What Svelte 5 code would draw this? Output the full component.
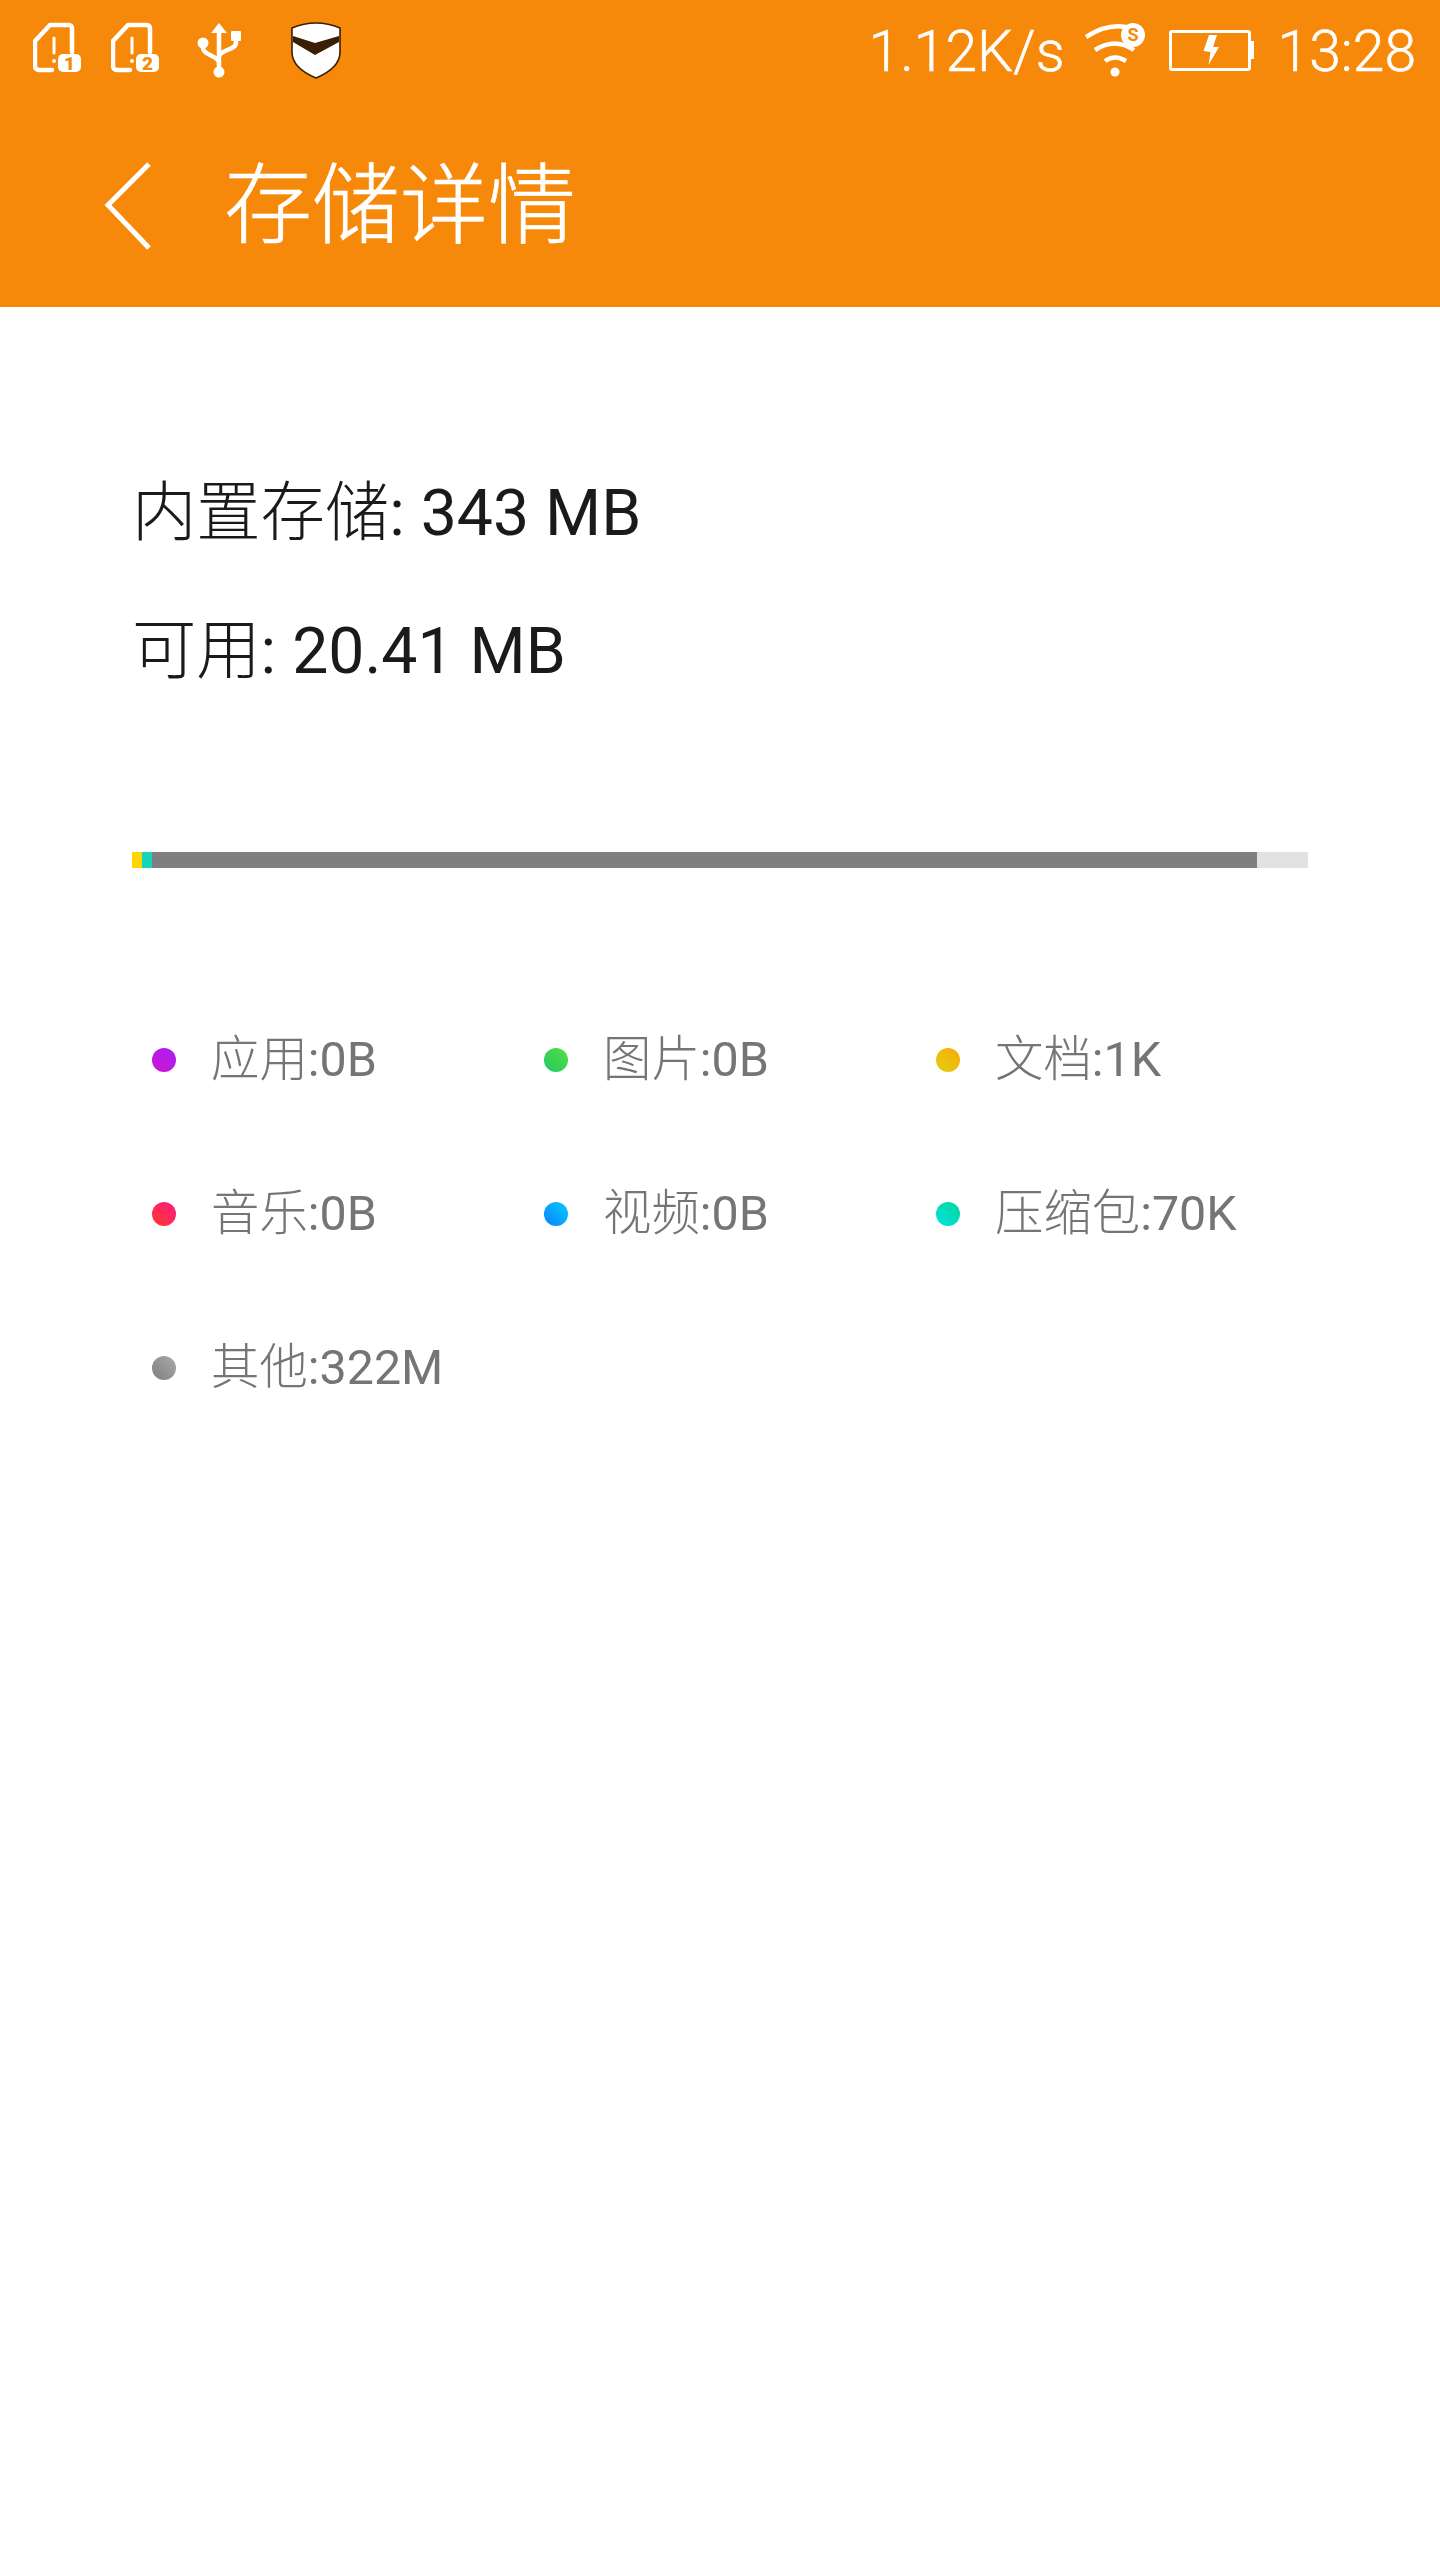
<script lang="ts">
	// 各カテゴリの凡例データ
	const legend = [
		{ name: '应用', size: ':0B', from: '#d014d0', to: '#a81ff5' },
		{ name: '图片', size: ':0B', from: '#1fc86a', to: '#5ade3c' },
		{ name: '文档', size: ':1K', from: '#e0d010', to: '#fba808' },
		{ name: '音乐', size: ':0B', from: '#ff3a2c', to: '#ff1a80' },
		{ name: '视频', size: ':0B', from: '#0a80ff', to: '#06ccff' },
		{ name: '压缩包', size: ':70K', from: '#00e2e0', to: '#05d69a' },
		{ name: '其他', size: ':322M', from: '#7e7e7e', to: '#ababab' }
	];
</script>

<div class="page">
	<header class="top">
		<div class="status">
			<div class="status-left">
				<svg class="sim" viewBox="33 20 48 60" width="48" height="60">
					<path class="line" d="M72 52V28a3 3 0 0 0-3-3H50L35 41v25a4 4 0 0 0 4 4h13" />
					<path class="line thin" d="M54 38v15" />
					<circle cx="54" cy="61" r="2" fill="#fff" />
					<rect x="58" y="54" width="23" height="18" rx="5" fill="#fff" />
					<text class="badge-num" x="69.5" y="70">1</text>
				</svg>
				<svg class="sim" viewBox="33 20 48 60" width="48" height="60">
					<path class="line" d="M72 52V28a3 3 0 0 0-3-3H50L35 41v25a4 4 0 0 0 4 4h13" />
					<path class="line thin" d="M54 38v15" />
					<circle cx="54" cy="61" r="2" fill="#fff" />
					<rect x="58" y="54" width="23" height="18" rx="5" fill="#fff" />
					<text class="badge-num" x="69.5" y="70">2</text>
				</svg>
				<svg class="usb" viewBox="198 20 46 60" width="46" height="60">
					<path d="M220 23l8 10h-16z" fill="#fff" />
					<path class="line" d="M220 32v40" />
					<circle cx="204" cy="43" r="5.5" fill="#fff" />
					<circle cx="220" cy="72" r="5.5" fill="#fff" />
					<rect x="232" y="31" width="10" height="10" rx="1" fill="#fff" />
					<path class="line" d="M204 45v3c0 7 16 8 16 15M237 40v3c0 7-17 7-17 14" />
				</svg>
				<svg class="shield" viewBox="290 20 52 60" width="52" height="60">
					<path d="M292 28q24-10 48 0v24q0 16-24 26-24-10-24-26z" fill="#fff" stroke="#3a1f05" stroke-width="1.6" />
					<path d="M293 36l22 7 24-7v6l-24 13-22-13z" fill="#3a1f05" />
				</svg>
			</div>
			<div class="status-right">
				<span class="speed">1.12K/s</span>
				<svg class="wifi" viewBox="1085 20 62 60" width="62" height="60">
					<circle cx="1116" cy="72" r="4.5" fill="#fff" />
					<path class="arc" d="M1106 61q10-7 21 0" />
					<path class="arc" d="M1096 50q20-13 39 0" />
					<path class="arc" d="M1087 37q26-17 50-7" />
					<circle cx="1134" cy="35" r="12" fill="#fff" />
					<text class="wifi-s" x="1134" y="41">S</text>
				</svg>
				<svg class="battery" viewBox="1168 20 87 60" width="87" height="60">
					<rect x="1170.5" y="31.500" width="79" height="38" rx="1.5" fill="none" stroke="#fff" stroke-width="3" />
					<rect x="1250" y="41" width="4" height="18" fill="#fff" />
					<path d="M1209 35h8l-4 12h6l-10.500 18 2-13-7-1z" fill="#fff" />
				</svg>
				<span class="clock">13:28</span>
			</div>
		</div>
		<div class="title-row">
			<svg class="back" viewBox="0 0 48 90" width="48" height="90">
				<path d="M45 3L4 44l41 43" fill="none" stroke="#fff" stroke-width="5" />
			</svg>
			<h1>存储详情</h1>
		</div>
	</header>

	<main class="content">
		<p class="info"><span class="cjk">内置存储</span>: 343 MB</p>
		<p class="info"><span class="cjk">可用</span>: 20.41 MB</p>

		<div class="bar">
			<span class="seg yellow"></span>
			<span class="seg teal"></span>
			<span class="seg gray"></span>
		</div>

		<ul class="legend">
			{#each legend as item}
				<li>
					<span class="dot" style="background: linear-gradient(45deg, {item.from}, {item.to})"></span>
					<span class="name"><span class="cjk">{item.name}</span>{item.size}</span>
				</li>
			{/each}
		</ul>
	</main>
</div>

<style>
	:global(body) {
		margin: 0;
		background: #ffffff;
	}

	.page {
		height: 2560px;
		background: #ffffff;
		font-family: 'Roboto', 'Noto Sans CJK SC', sans-serif;
	}

	.top {
		height: 307px;
		background: #f7890a;
		color: #ffffff;
	}

	.status {
		height: 100px;
		display: flex;
		justify-content: space-between;
		align-items: center;
		padding: 0 24px 0 33px;
	}

	.status-left,
	.status-right {
		display: flex;
		align-items: center;
	}

	.status svg {
		display: block;
	}

	.sim {
		margin-right: 30px;
	}

	.usb {
		margin-left: 8px;
		margin-right: 47px;
	}

	.line {
		fill: none;
		stroke: #ffffff;
		stroke-width: 4.5;
		stroke-linecap: round;
		stroke-linejoin: round;
	}

	.line.thin {
		stroke-width: 3;
	}

	.arc {
		fill: none;
		stroke: #ffffff;
		stroke-width: 4.5;
	}

	.badge-num {
		fill: #f7890a;
		font-size: 19px;
		font-weight: 900;
		text-anchor: middle;
	}

	.wifi-s {
		fill: #f7890a;
		font-size: 18px;
		font-weight: 700;
		text-anchor: middle;
	}

	.speed,
	.clock {
		padding-top: 4px;
		font-size: 57px;
		font-weight: 300;
		line-height: 96px;
		-webkit-text-stroke: 0.5px #ffffff;
	}

	.wifi {
		margin-left: 19px;
		margin-right: 22px;
	}

	.battery {
		margin-right: 23px;
	}

	.title-row {
		height: 201px;
		display: flex;
		align-items: center;
		padding: 6px 0 0 104px;
	}

	.back {
		display: block;
		margin-top: -2px;
	}

	h1 {
		margin: 0 0 2px 72px;
		font-size: 88px;
		font-weight: 300;
		line-height: 1;
		-webkit-text-stroke: 0.6px #ffffff;
	}

	.content {
		padding: 137px 132px 0;
	}

	.info {
		margin: 0;
		font-size: 64.3px;
		line-height: 138px;
		color: #1a1a1a;
	}

	.cjk {
		font-weight: 300;
	}

	.bar {
		display: flex;
		height: 16px;
		margin-top: 132px;
		background: #e2e2e2;
	}

	.seg {
		display: block;
		height: 100%;
	}

	.yellow {
		width: 10px;
		background: #fdd600;
	}

	.teal {
		width: 10px;
		background: #14d6b8;
	}

	.gray {
		width: 1105px;
		background: #7f7f7f;
	}

	.legend {
		display: grid;
		grid-template-columns: repeat(3, 392px);
		grid-auto-rows: 154px;
		margin: 115px 0 0;
		padding: 0;
		list-style: none;
	}

	.legend li {
		display: flex;
		align-items: center;
		padding-left: 20px;
	}

	.dot {
		width: 24px;
		height: 24px;
		border-radius: 50%;
		margin-right: 35px;
	}

	.name {
		padding-bottom: 10px;
		font-size: 48.4px;
		color: #757575;
	}
</style>
